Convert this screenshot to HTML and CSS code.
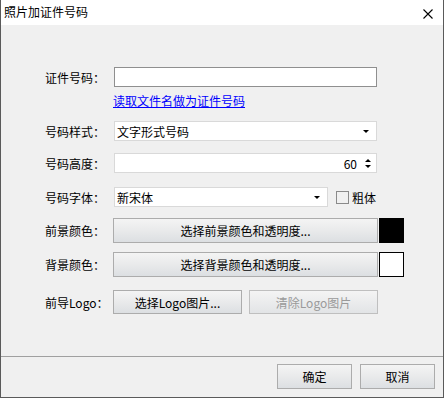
FILE: index.html
```html
<!DOCTYPE html>
<html lang="zh-CN">
<head>
    <meta charset="UTF-8">
    <title>照片加证件号码</title>
    <link rel="stylesheet" href="styles.css">
</head>
<body>
    <div class="window">
        <div class="titlebar">
            <span class="title">照片加证件号码</span>
            <svg class="close" width="10" height="10" viewBox="0 0 10 10">
                <path d="M0.5 0.5 L9.5 9.5 M9.5 0.5 L0.5 9.5" stroke="#000" stroke-width="1.1" fill="none"/>
            </svg>
        </div>
        <div class="content">
            <div class="row row-id">
                <span class="label">证件号码：</span>
                <div class="textbox"></div>
            </div>
            <div class="row row-link">
                <span class="label"></span>
                <a class="link" href="#">读取文件名做为证件号码</a>
            </div>
            <div class="row row-style">
                <span class="label">号码样式：</span>
                <div class="combo wide">
                    <span>文字形式号码</span>
                    <span class="arrow"></span>
                </div>
            </div>
            <div class="row row-height">
                <span class="label">号码高度：</span>
                <div class="spin">
                    <span class="value">60</span>
                    <span class="spin-btns"><span class="up"></span><span class="down"></span></span>
                </div>
            </div>
            <div class="row row-font">
                <span class="label">号码字体：</span>
                <div class="combo short">
                    <span>新宋体</span>
                    <span class="arrow"></span>
                </div>
                <span class="check"></span>
                <span class="check-label">粗体</span>
            </div>
            <div class="row row-fg">
                <span class="label">前景颜色：</span>
                <button class="btn color-btn">选择前景颜色和透明度...</button>
                <span class="swatch black"></span>
            </div>
            <div class="row row-bg">
                <span class="label">背景颜色：</span>
                <button class="btn color-btn">选择背景颜色和透明度...</button>
                <span class="swatch white"></span>
            </div>
            <div class="row row-logo">
                <span class="label">前导Logo：</span>
                <button class="btn logo-btn">选择Logo图片...</button>
                <button class="btn logo-btn disabled">清除Logo图片</button>
            </div>
        </div>
        <div class="footer">
            <button class="btn dlg-btn">确定</button>
            <button class="btn dlg-btn">取消</button>
        </div>
    </div>
</body>
</html>
```

FILE: styles.css
```css
html, body {
    margin: 0;
    padding: 0;
}

body {
    font-family: "Noto Sans CJK SC", "Noto Sans", sans-serif;
    font-size: 12px;
    color: #000;
    background: #f0f0f0;
}

.window {
    width: 444px;
    height: 398px;
    box-sizing: border-box;
    border: 1px solid #5a5a5a;
    border-top: none;
    background: #f0f0f0;
    display: flex;
    flex-direction: column;
}

.titlebar {
    height: 25px;
    background: #fff;
    display: flex;
    align-items: center;
    padding: 0 10px 0 3px;
    flex-shrink: 0;
}

.title {
    flex: 1;
    line-height: 14px;
    margin-top: -1px;
}

.close {
    display: block;
    margin-top: 2px;
}

.content {
    flex: 1;
    padding-left: 44px;
}

.row {
    display: flex;
    align-items: center;
}

.label {
    width: 68px;
    flex-shrink: 0;
}

.row-id { margin-top: 42px; height: 20px; }
.row-link { margin-top: 7px; height: 14px; }
.row-style { margin-top: 13px; height: 20px; }
.row-height { margin-top: 12px; height: 20px; }
.row-font { margin-top: 14px; height: 20px; }
.row-fg { margin-top: 11px; height: 25px; }
.row-bg { margin-top: 9px; height: 25px; }
.row-logo { margin-top: 13px; height: 24px; }

.textbox {
    width: 261px;
    height: 18px;
    margin-left: 1px;
    border: 1px solid #8f8f8f;
    background: #fff;
}

.link {
    color: #0000ff;
    text-decoration: underline;
    line-height: 14px;
}

.combo, .spin {
    height: 18px;
    margin-left: 1px;
    border: 1px solid #d9d9d9;
    background: #fff;
    display: flex;
    align-items: center;
    box-sizing: content-box;
}

.combo {
    padding-left: 2px;
}

.combo span:first-child {
    flex: 1;
}

.wide { width: 259px; }
.short { width: 210px; }

.arrow {
    width: 0;
    height: 0;
    border-left: 3px solid transparent;
    border-right: 3px solid transparent;
    border-top: 3px solid #000;
    margin-right: 7px;
}

.spin {
    width: 261px;
    justify-content: flex-end;
}

.spin .value {
    margin-right: 8px;
}

.spin-btns {
    display: flex;
    flex-direction: column;
    gap: 3px;
    margin-right: 5px;
}

.spin-btns .up {
    border-left: 3px solid transparent;
    border-right: 3px solid transparent;
    border-bottom: 3px solid #000;
}

.spin-btns .down {
    border-left: 3px solid transparent;
    border-right: 3px solid transparent;
    border-top: 3px solid #000;
}

.check {
    width: 11px;
    height: 11px;
    border: 1px solid #8a8a8a;
    margin-left: 8px;
    margin-right: 3px;
}

.btn {
    font-family: inherit;
    font-size: 12px;
    color: #000;
    border: 1px solid #acacac;
    background: linear-gradient(#f4f4f4, #e9eaeb 50%, #dcdfe2);
    padding: 0;
    margin: 0;
    box-sizing: border-box;
}

.color-btn {
    width: 265px;
    height: 25px;
}

.swatch {
    width: 25px;
    height: 25px;
    box-sizing: border-box;
    margin-left: 1px;
}

.black { background: #000; }
.white { background: #fff; border: 1px solid #000; }

.logo-btn {
    width: 129px;
    height: 24px;
}

.logo-btn + .logo-btn {
    margin-left: 7px;
}

.disabled {
    color: #9a9a9a;
    border-color: #bfbfbf;
    background: linear-gradient(#f4f4f4, #ebeced 50%, #e2e4e6);
}

.footer {
    border-top: 1px solid #a0a0a0;
    padding: 7px 8px 8px 0;
    display: flex;
    justify-content: flex-end;
    gap: 8px;
}

.dlg-btn {
    width: 75px;
    height: 25px;
}
```
